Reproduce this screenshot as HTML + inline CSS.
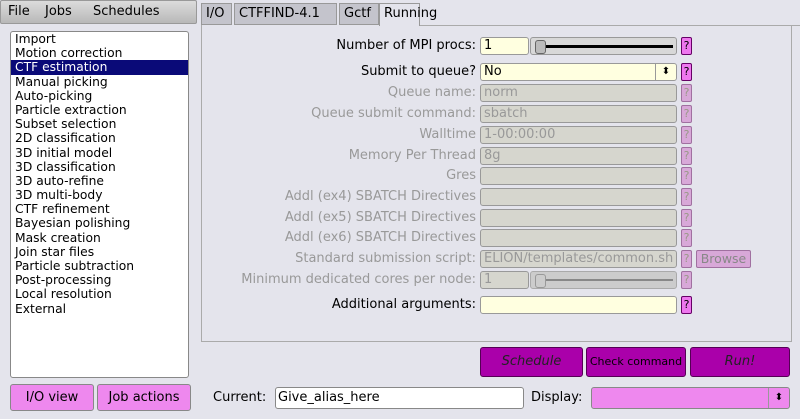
<!DOCTYPE html>
<html><head><style>
body{margin:0;width:800px;height:419px;background:#e4e4ec;font-family:"DejaVu Sans","Liberation Sans",sans-serif;font-size:12px;position:relative;overflow:hidden;color:#000}
.a{position:absolute}
.menu{left:0;top:0;width:197px;height:24px;background:linear-gradient(#dcdcdc,#b8b8b8);border:1px solid #999;box-sizing:border-box;border-radius:2px;font-size:13px}
.menu span{position:absolute;top:3px}
.list{left:10px;top:31px;width:179px;height:347px;background:#fff;border:1px solid #888;border-radius:3px;box-sizing:border-box}
.list div{height:14.2px;line-height:14px;padding-left:4px;font-size:12.3px}
.sel{background:#0a0a78;color:#fff}
.tab{top:3px;height:22px;background:#c4c4cc;border:1px solid #999;box-sizing:border-box;font-size:13px;line-height:20px;padding:0 4px}
.panel{left:201px;top:25px;width:591px;height:317px;border:1px solid #aaa;border-top:none;box-sizing:border-box}
.lab{right:324px;text-align:right;font-size:13px;white-space:nowrap}
.dis{color:#999}
.f{left:480px;width:197px;height:18px;border:1px solid #999;border-radius:3px;box-sizing:border-box;background:#d6d6ce;color:#999;font-size:13px;line-height:16px;padding-left:3px}
.y{background:#ffffe0;color:#000}
.h{left:681px;width:11px;height:18px;border:1px solid #a070a0;border-radius:2px;box-sizing:border-box;background:#d8a8d8;color:#998;font-size:11px;text-align:center;line-height:16px}
.hh{background:#ee77ee;color:#000;border-color:#606}
.btn{border:1px solid #505;border-radius:3px;box-sizing:border-box;background:#aa00aa;text-align:center}
.pb{background:#ee88ee;border:1px solid #888;border-radius:3px;box-sizing:border-box;text-align:center;font-size:13px}
</style></head><body>
<div class="a menu"><span style="left:7px">File</span><span style="left:44px">Jobs</span><span style="left:92px">Schedules</span></div>
<div class="a list">
<div>Import</div><div>Motion correction</div><div class="sel">CTF estimation</div><div>Manual picking</div><div>Auto-picking</div><div>Particle extraction</div><div>Subset selection</div><div>2D classification</div><div>3D initial model</div><div>3D classification</div><div>3D auto-refine</div><div>3D multi-body</div><div>CTF refinement</div><div>Bayesian polishing</div><div>Mask creation</div><div>Join star files</div><div>Particle subtraction</div><div>Post-processing</div><div>Local resolution</div><div>External</div>
</div>
<div class="a tab" style="left:201px;width:31px">I/O</div>
<div class="a tab" style="left:234px;width:103px">CTFFIND-4.1</div>
<div class="a tab" style="left:339px;width:40px">Gctf</div>
<div class="a tab" style="left:379px;width:41px;background:#e4e4ec;border-bottom:none;height:23px">Running</div>
<div class="a" style="left:420px;top:25px;width:380px;height:1px;background:#aaa"></div>
<div class="a panel"></div>

<div class="a lab" style="top:38px">Number of MPI procs:</div>
<div class="a f y" style="top:37px;width:49px">1</div>
<div class="a" style="left:530px;top:37px;width:147px;height:18px;border:1px solid #999;border-radius:3px;box-sizing:border-box;background:#d8d8d8"><div class="a" style="left:6px;top:7px;width:136px;height:3px;background:#000"></div><div class="a" style="left:4px;top:2px;width:9px;height:12px;background:#bbb;border:1px solid #666;border-radius:3px"></div></div>
<div class="a h hh" style="top:37px">?</div>

<div class="a lab" style="top:64px">Submit to queue?</div>
<div class="a f y" style="top:63px">No<span class="a" style="right:0;top:0;width:20px;height:16px;border-left:1px solid #999;text-align:center;font-size:10px">&#x2B0D;</span></div>
<div class="a h hh" style="top:63px">?</div>

<div class="a lab dis" style="top:85px">Queue name:</div><div class="a f" style="top:84px">norm</div><div class="a h" style="top:84px">?</div>
<div class="a lab dis" style="top:106px">Queue submit command:</div><div class="a f" style="top:105px">sbatch</div><div class="a h" style="top:105px">?</div>
<div class="a lab dis" style="top:127px">Walltime</div><div class="a f" style="top:126px">1-00:00:00</div><div class="a h" style="top:126px">?</div>
<div class="a lab dis" style="top:148px">Memory Per Thread</div><div class="a f" style="top:147px">8g</div><div class="a h" style="top:147px">?</div>
<div class="a lab dis" style="top:168px">Gres</div><div class="a f" style="top:167px"></div><div class="a h" style="top:167px">?</div>
<div class="a lab dis" style="top:189px">Addl (ex4) SBATCH Directives</div><div class="a f" style="top:188px"></div><div class="a h" style="top:188px">?</div>
<div class="a lab dis" style="top:210px">Addl (ex5) SBATCH Directives</div><div class="a f" style="top:209px"></div><div class="a h" style="top:209px">?</div>
<div class="a lab dis" style="top:230px">Addl (ex6) SBATCH Directives</div><div class="a f" style="top:229px"></div><div class="a h" style="top:229px">?</div>
<div class="a lab dis" style="top:251px">Standard submission script:</div><div class="a f" style="top:250px;overflow:hidden;white-space:nowrap">ELION/templates/common.sh</div><div class="a h" style="top:250px">?</div>
<div class="a" style="left:696px;top:250px;width:55px;height:18px;border:1px solid #a070a0;border-radius:2px;box-sizing:border-box;background:#d8a8d8;color:#888;text-align:center;line-height:16px;font-size:12.5px">Browse</div>
<div class="a lab dis" style="top:272px">Minimum dedicated cores per node:</div><div class="a f" style="top:271px;width:49px">1</div>
<div class="a" style="left:530px;top:271px;width:147px;height:18px;border:1px solid #aaa;border-radius:3px;box-sizing:border-box;background:#ccc"><div class="a" style="left:6px;top:7px;width:136px;height:2px;background:#888"></div><div class="a" style="left:4px;top:2px;width:9px;height:12px;background:#ccc;border:1px solid #999;border-radius:3px"></div></div>
<div class="a h" style="top:271px">?</div>
<div class="a lab" style="top:297px">Additional arguments:</div><div class="a f y" style="top:296px"></div><div class="a h hh" style="top:296px">?</div>

<div class="a btn" style="left:480px;top:347px;width:103px;height:30px;line-height:28px;font-style:italic;font-size:13px;color:#222">Schedule</div>
<div class="a btn" style="left:586px;top:347px;width:100px;height:30px;line-height:28px;font-size:11px">Check command</div>
<div class="a btn" style="left:690px;top:347px;width:100px;height:30px;line-height:28px;font-style:italic;font-size:13px;color:#222">Run!</div>

<div class="a pb" style="left:10px;top:384px;width:84px;height:27px;line-height:25px">I/O view</div>
<div class="a pb" style="left:97px;top:384px;width:94px;height:27px;line-height:25px">Job actions</div>
<div class="a" style="left:213px;top:390px;font-size:13px">Current:</div>
<div class="a" style="left:275px;top:387px;width:249px;height:22px;background:#fff;border:1px solid #888;border-radius:3px;box-sizing:border-box;font-size:13px;line-height:20px;padding-left:2px">Give_alias_here</div>
<div class="a" style="left:531px;top:390px;font-size:13px">Display:</div>
<div class="a" style="left:591px;top:387px;width:199px;height:22px;background:#ee88ee;border:1px solid #888;border-radius:3px;box-sizing:border-box"><span class="a" style="right:0;top:0;width:20px;height:20px;border-left:1px solid #999;text-align:center;font-size:10px;line-height:20px">&#x2B0D;</span></div>
</body></html>
